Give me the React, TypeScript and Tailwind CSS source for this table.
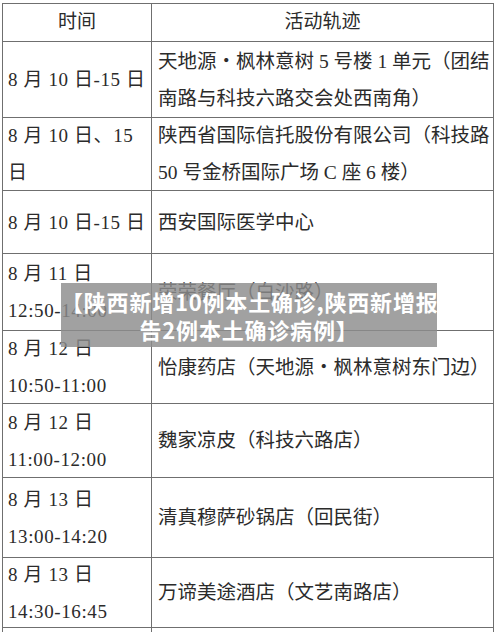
const rows: { h: string; time: string[]; place: string[] }[] = [
  { h: "h-[76px]", time: ["8 月 10 日-15 日"], place: ["天地源・枫林意树 5 号楼 1 单元（团结", "南路与科技六路交会处西南角）"] },
  { h: "h-[73px]", time: ["8 月 10 日、15", "日"], place: ["陕西省国际信托股份有限公司（科技路", "50 号金桥国际广场 C 座 6 楼）"] },
  { h: "h-[63px]", time: ["8 月 10 日-15 日"], place: ["西安国际医学中心"] },
  { h: "h-[77px]", time: ["8 月 11 日", "12:50-14:00"], place: ["荣荣餐厅（白沙路）"] },
  { h: "h-[73px]", time: ["8 月 12 日", "10:50-11:00"], place: ["怡康药店（天地源・枫林意树东门边）"] },
  { h: "h-[74px]", time: ["8 月 12 日", "11:00-12:00"], place: ["魏家凉皮（科技六路店）"] },
  { h: "h-[80px]", time: ["8 月 13 日", "13:00-14:20"], place: ["清真穆萨砂锅店（回民街）"] },
  { h: "h-[70px]", time: ["8 月 13 日", "14:30-16:45"], place: ["万谛美途酒店（文艺南路店）"] },
  { h: "h-[60px]", time: [""], place: [""] },
];

export default function App() {
  return (
    <div className="relative h-[632px] w-[500px] overflow-hidden bg-white text-[#2b2b2b] [font-family:'Liberation_Serif','Noto_Sans_CJK_SC',serif]">
      {/* table */}
      <div className="ml-[2px] mt-[3px] w-[492px] border-x border-t border-[#6f6f6f]">
        <div className="flex h-[38px] border-b border-[#6f6f6f] text-[19px]">
          <div className="flex w-[149px] items-center justify-center border-r border-[#6f6f6f]">时间</div>
          <div className="flex flex-1 items-center justify-center">活动轨迹</div>
        </div>
        {rows.map((r, i) => (
          <div key={i} className={`flex border-b border-[#6f6f6f] ${r.h}`}>
            <div className="flex w-[149px] flex-col justify-center whitespace-nowrap border-r border-[#6f6f6f] pl-[5px] text-[19px] leading-[37px] tracking-[0.6px]">
              {r.time.map((t, j) => (
                <div key={j}>{t}</div>
              ))}
            </div>
            <div className="flex flex-1 flex-col justify-center whitespace-nowrap pl-[6px] text-[19.5px] leading-[37px]">
              {r.place.map((t, j) => (
                <div key={j}>{t}</div>
              ))}
            </div>
          </div>
        ))}
      </div>

      {/* title overlay */}
      <div className="absolute left-[61px] top-[283px] flex h-[64px] w-[376px] flex-col justify-center bg-[rgba(140,140,140,0.82)] text-center text-[22px] font-bold leading-[28px] tracking-[0.8px] text-white [font-family:'Noto_Sans_CJK_SC',sans-serif]">
        <div className="whitespace-nowrap">【陕西新增10例本土确诊,陕西新增报</div>
        <div className="whitespace-nowrap">告2例本土确诊病例】</div>
      </div>
    </div>
  );
}
